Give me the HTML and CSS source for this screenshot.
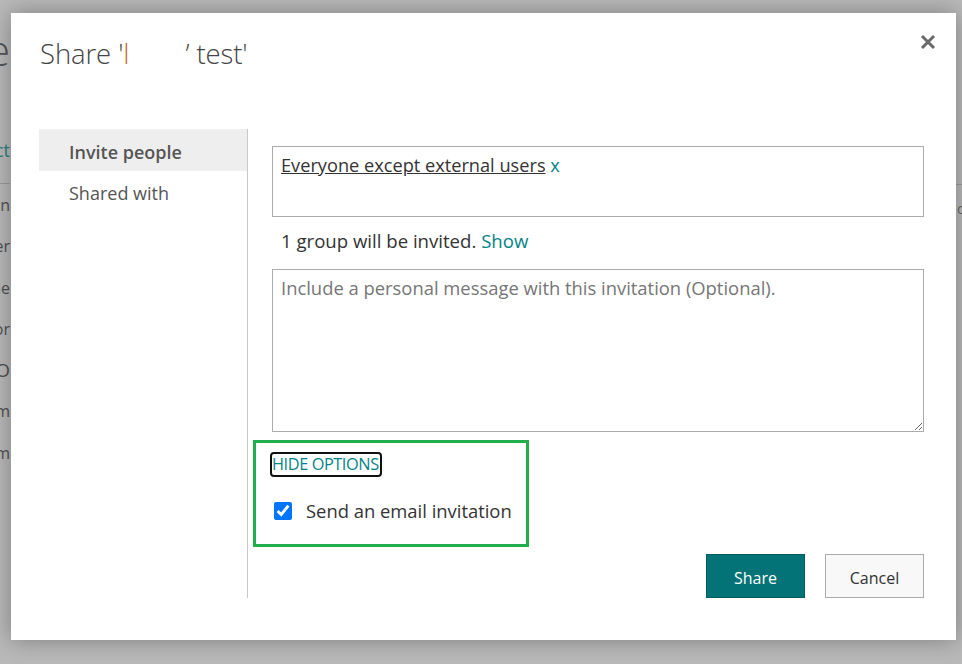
FILE: index.html
```html
<!DOCTYPE html>
<html lang="en">
<head>
<meta charset="utf-8">
<title>Share</title>
<link rel="stylesheet" href="styles.css">
</head>
<body>
<div class="page">
  <div class="page-left">
    <div class="page-title">Site</div>
    <div class="page-link">Connect</div>
    <div class="page-rule"></div>
    <ul class="page-list">
      <li>Plan</li><li>Header</li><li>Home</li><li>Vendor</li><li class="big">PO</li><li>Team</li><li>Form</li>
    </ul>
  </div>
  <div class="page-right">
    <div class="page-right-rule"></div>
    <div class="page-right-c">c</div>
  </div>
</div>

<div class="dialog" role="dialog" aria-labelledby="dlg-title">
  <header class="dialog-head">
    <h1 class="dialog-title" id="dlg-title">Share '<span class="accent">l</span><span class="redact"></span>’ test'</h1>
    <button class="close" aria-label="Close">
      <svg width="16" height="16" viewBox="0 0 16 16"><path d="M2 2 L14 14 M14 2 L2 14" stroke="#6a6a6a" stroke-width="3" stroke-linecap="butt"/></svg>
    </button>
  </header>
  <div class="dialog-body">
    <nav class="side">
      <a class="side-item active">Invite people</a>
      <a class="side-item">Shared with</a>
    </nav>
    <section class="main">
      <div class="people-box">
        <span class="person">Everyone except external users</span> <span class="remove">x</span>
      </div>
      <p class="invite-note">1 group will be invited. <a class="link">Show</a></p>
      <textarea class="message" placeholder="Include a personal message with this invitation (Optional)."></textarea>
      <div class="options">
        <a class="hide-options">HIDE OPTIONS</a>
        <label class="check-row"><input type="checkbox" checked><span>Send an email invitation</span></label>
      </div>
      <div class="actions">
        <button class="btn primary">Share</button>
        <button class="btn">Cancel</button>
      </div>
    </section>
  </div>
</div>
</body>
</html>
```

FILE: styles.css
```css
* { box-sizing: border-box; }
html, body { margin: 0; padding: 0; }
body {
  width: 962px;
  height: 664px;
  overflow: hidden;
  background: #b9b9b9;
  font-family: "Open Sans", "Noto Sans", sans-serif;
  color: #333;
  position: relative;
}

/* dimmed page behind */
.page {
  position: absolute;
  inset: 0;
  color: #4e4e4e;
}
.page-left {
  position: absolute;
  left: -190px;
  top: 0;
  width: 200px;
  text-align: right;
}
.page-title {
  margin-top: 20px;
  height: 60px;
  font-size: 42px;
  line-height: 60px;
  font-weight: 300;
  color: #555;
}
.page-link {
  margin-top: 58px;
  font-size: 18px;
  line-height: 24px;
  color: #2f7f80;
}
.page-rule {
  margin-top: 21px;
  margin-left: auto;
  width: 14px;
  height: 1px;
  background: #9a9a9a;
}
.page-list {
  margin: 8px 0 0;
  padding: 0;
  list-style: none;
  font-size: 16px;
  color: #505050;
}
.page-list li { height: 41.3px; line-height: 26px; }
.page-list li.big { font-size: 19px; }
.page-right {
  position: absolute;
  left: 956px;
  top: 0;
  width: 6px;
  height: 100%;
}
.page-right-rule { margin-top: 184px; height: 1px; background: #9c9c9c; }
.page-right-c { margin-top: 14px; margin-left: 1px; font-size: 14px; color: #666; }

/* dialog */
.dialog {
  position: absolute;
  left: 11px;
  top: 13px;
  width: 945px;
  height: 627px;
  background: #fff;
  box-shadow: 0 0 22px rgba(0,0,0,0.32);
  padding: 0 32px 0 28px;
  display: flex;
  flex-direction: column;
}
.dialog-head {
  display: flex;
  justify-content: space-between;
  align-items: flex-start;
  height: 116px;
}
.dialog-title {
  margin: 22px 0 0 1px;
  font-size: 27.5px;
  font-weight: 300;
  color: #444;
  letter-spacing: -0.1px;
}
.accent { color: #c96a1e; }
.redact { display: inline-block; width: 56px; }
.close {
  margin: 21px -12px 0 0;
  padding: 0;
  border: 0;
  background: transparent;
  width: 16px;
  height: 16px;
}
.close svg { display: block; }

.dialog-body {
  display: flex;
  height: 469px;
}
.side {
  width: 209px;
  border-right: 1px solid #c8c8c8;
  display: flex;
  flex-direction: column;
}
.side-item {
  height: 42px;
  line-height: 46px;
  padding-left: 30px;
  font-size: 18px;
  color: #555;
}
.side-item.active {
  background: #eeeeee;
  font-weight: 600;
}
.side-item + .side-item { line-height: 44px; }

.main {
  flex: 1;
  padding: 17px 0 0 24px;
  display: flex;
  flex-direction: column;
}
.people-box {
  height: 71px;
  border: 1px solid #ababab;
  padding: 5px 8px;
  font-size: 18.2px;
  line-height: 27px;
}
.person { text-decoration: underline; color: #333; }
.remove { color: #038387; }
.invite-note {
  margin: 12px 0 0 9px;
  font-size: 18.6px;
  line-height: 24px;
  color: #333;
}
.link { color: #038387; }
.message {
  margin-top: 16px;
  height: 163px;
  width: 100%;
  border: 1px solid #ababab;
  padding: 5px 8px;
  font-family: inherit;
  font-size: 18.4px;
  line-height: 26px;
  resize: vertical;
  display: block;
}
.message::placeholder { color: #767676; }

.options {
  margin: 8px 0 0 -19px;
  width: 276px;
  height: 107px;
  border: 3px solid #21ae4b;
  padding: 9px 0 0 14px;
}
.hide-options {
  display: inline-block;
  font-size: 16.3px;
  line-height: 21px;
  color: #038387;
  padding: 0 1px 0 0;
  border: 2px solid #111;
  border-radius: 4px;
  letter-spacing: -0.4px;
}
.check-row {
  display: flex;
  align-items: center;
  margin-top: 21px;
  margin-left: 4px;
  font-size: 18.4px;
  color: #333;
}
.check-row input {
  width: 18px;
  height: 18px;
  margin: 0 14px 0 0;
  accent-color: #0075ff;
}

.actions {
  display: flex;
  justify-content: flex-end;
  gap: 20px;
  margin-top: 7px;
}
.btn {
  width: 99px;
  height: 44px;
  border: 1px solid #ababab;
  background: #f8f8f8;
  font-family: inherit;
  font-size: 16px;
  color: #333;
  padding-top: 4px;
}
.btn.primary {
  background: #037377;
  border-color: #025d60;
  color: #fff;
}
```
